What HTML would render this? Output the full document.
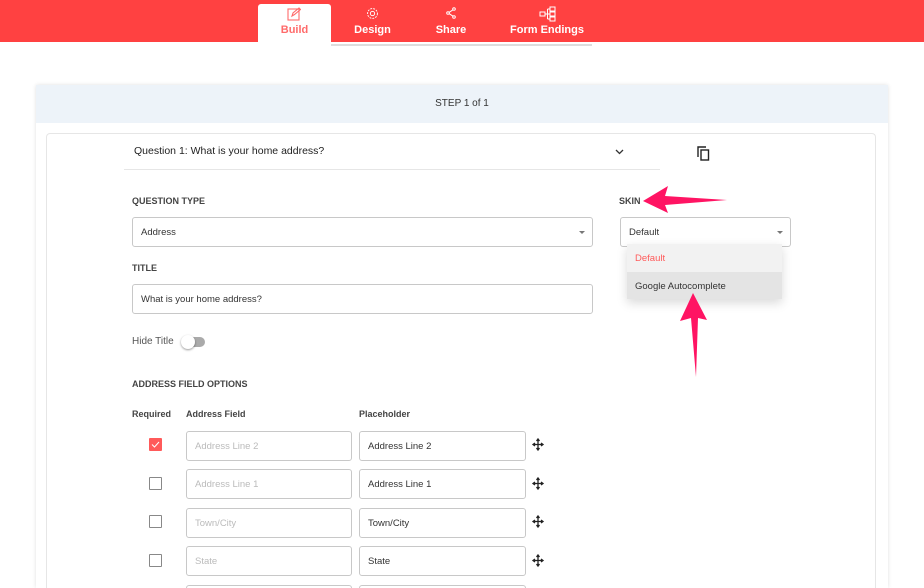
<!DOCTYPE html>
<html><head><meta charset="utf-8"><style>
*{box-sizing:border-box;margin:0;padding:0}
html,body{width:924px;height:588px;overflow:hidden}
body{background:#fff;font-family:"Liberation Sans",sans-serif;color:#333;position:relative}
.a{position:absolute}
.hdr{left:0;top:0;width:924px;height:42px;background:#ff4141}
.tab{top:0;height:42px;color:#fff;font-size:11px;font-weight:bold;text-align:center}
.tab span{position:absolute;left:0;right:0;top:24px}
.lbl{font-size:9px;font-weight:bold;color:#444}
.inp{border:1px solid #c8c8c8;border-radius:3px;background:#fff;font-size:9.5px;color:#333;padding-left:8px;display:flex;align-items:center}
.ph{color:#bbb}
.cb{width:13px;height:13px;border:1px solid #888;border-radius:1px;background:#fff}
</style></head><body>
<div class="a hdr"></div>
<div class="a" style="left:258px;top:4px;width:73px;height:38px;background:#fff;border-radius:3px 3px 0 0"></div>
<div class="a" style="left:331px;top:44px;width:261px;height:2px;background:#ddd"></div>
<div class="a tab" style="left:258px;width:73px;color:#ff6b6b">
<svg class="a" style="left:29px;top:7px" width="14" height="14" viewBox="0 0 14 14" fill="none" stroke="#ff6b6b" stroke-width="1.1"><rect x="1" y="2" width="11" height="11"/><path d="M5 9l1-3 6-5 1.5 1.5-6 5z"/></svg>
<span>Build</span></div>
<div class="a tab" style="left:340px;width:65px">
<svg class="a" style="left:26px;top:7px" width="13" height="13" viewBox="0 0 14 14" fill="none" stroke="#fff" stroke-width="1"><circle cx="7" cy="7" r="2.3"/><circle cx="7" cy="7" r="5.3" stroke-dasharray="2 1.2"/></svg>
<span>Design</span></div>
<div class="a tab" style="left:420px;width:62px">
<svg class="a" style="left:25px;top:7px" width="12" height="12" viewBox="0 0 12 12" fill="none" stroke="#fff" stroke-width="1"><circle cx="9" cy="2" r="1.3"/><circle cx="3" cy="6" r="1.3"/><circle cx="9" cy="10" r="1.3"/><path d="M4 5.4l4-2.6M4 6.6l4 2.6"/></svg>
<span>Share</span></div>
<div class="a tab" style="left:505px;width:84px">
<svg class="a" style="left:34px;top:6px" width="17" height="16" viewBox="0 0 17 16" fill="none" stroke="#fff" stroke-width="1"><rect x="1" y="6" width="5" height="4"/><rect x="11" y="1" width="5" height="4"/><rect x="11" y="6" width="5" height="4"/><rect x="11" y="11" width="5" height="4"/><path d="M6 8h5M8.5 3v10M8.5 3h2.5M8.5 13h2.5"/></svg>
<span>Form Endings</span></div>

<div class="a" style="left:36px;top:85px;width:852px;height:503px;background:#fff;box-shadow:0 0 4px rgba(0,0,0,.12)"></div>
<div class="a" style="left:36px;top:85px;width:852px;height:38px;background:#edf3f9;font-size:10px;color:#333;text-align:center;line-height:38px">STEP 1 of 1</div>
<div class="a" style="left:46px;top:133px;width:830px;height:455px;border:1px solid #e6e6e6;border-bottom:0;border-radius:4px 4px 0 0"></div>
<div class="a" style="left:134px;top:145px;font-size:10.5px;color:#222">Question 1: What is your home address?</div>
<div class="a" style="left:124px;top:169px;width:536px;height:1px;background:#e6e6e6"></div>
<svg class="a" style="left:615px;top:148px" width="9" height="7" viewBox="0 0 9 7" fill="none" stroke="#333" stroke-width="1.3"><path d="M1 2l3.5 3.5L8 2"/></svg>
<svg class="a" style="left:697px;top:146px" width="13" height="15" viewBox="0 0 13 15" fill="none" stroke="#222" stroke-width="1.4"><path d="M1 11V1h8"/><rect x="4" y="4" width="7.5" height="10"/></svg>

<div class="a lbl" style="left:132px;top:196px">QUESTION TYPE</div>
<div class="a inp" style="left:132px;top:217px;width:461px;height:30px">Address</div>
<div class="a" style="left:579px;top:231px;border:3px solid transparent;border-top:3px solid #777;border-bottom:0"></div>
<div class="a lbl" style="left:619px;top:196px">SKIN</div>
<div class="a inp" style="left:620px;top:217px;width:171px;height:30px">Default</div>
<div class="a" style="left:777px;top:231px;border:3px solid transparent;border-top:3px solid #777;border-bottom:0"></div>
<div class="a" style="left:627px;top:244px;width:155px;height:55px;background:#f2f2f2;box-shadow:0 4px 10px rgba(0,0,0,.15)"></div>
<div class="a" style="left:627px;top:272px;width:155px;height:27px;background:#e4e4e4"></div>
<div class="a" style="left:635px;top:253px;font-size:9.5px;color:#ff5a5a">Default</div>
<div class="a" style="left:635px;top:281px;font-size:9.5px;color:#333">Google Autocomplete</div>

<div class="a lbl" style="left:132px;top:263px">TITLE</div>
<div class="a inp" style="left:132px;top:284px;width:461px;height:30px">What is your home address?</div>
<div class="a" style="left:132px;top:336px;font-size:10px;color:#555">Hide Title</div>
<div class="a" style="left:183px;top:337px;width:22px;height:10px;border-radius:5px;background:#aaa"></div>
<div class="a" style="left:181px;top:335px;width:14px;height:14px;border-radius:7px;background:#fff;box-shadow:0 1px 2px rgba(0,0,0,.4)"></div>
<div class="a lbl" style="left:132px;top:379px">ADDRESS FIELD OPTIONS</div>
<div class="a lbl" style="left:132px;top:409px">Required</div>
<div class="a lbl" style="left:186px;top:409px">Address Field</div>
<div class="a lbl" style="left:359px;top:409px">Placeholder</div>

<div class="a cb" style="left:149px;top:438px;background:#ff5a5a;border-color:#ff5a5a"></div>
<svg class="a" style="left:151px;top:441px" width="9" height="7" viewBox="0 0 9 7" fill="none" stroke="#fff" stroke-width="1"><path d="M1 3.5l2.5 2.5L8 1"/></svg>
<div class="a inp ph" style="left:186px;top:431px;width:166px;height:30px">Address Line 2</div>
<div class="a inp" style="left:359px;top:431px;width:167px;height:30px">Address Line 2</div>

<div class="a cb" style="left:149px;top:477px"></div>
<div class="a inp ph" style="left:186px;top:469px;width:166px;height:30px">Address Line 1</div>
<div class="a inp" style="left:359px;top:469px;width:167px;height:30px">Address Line 1</div>

<div class="a cb" style="left:149px;top:515px"></div>
<div class="a inp ph" style="left:186px;top:508px;width:166px;height:30px">Town/City</div>
<div class="a inp" style="left:359px;top:508px;width:167px;height:30px">Town/City</div>

<div class="a cb" style="left:149px;top:554px"></div>
<div class="a inp ph" style="left:186px;top:546px;width:166px;height:30px">State</div>
<div class="a inp" style="left:359px;top:546px;width:167px;height:30px">State</div>

<div class="a" style="left:186px;top:585px;width:166px;height:3px;border:1px solid #c8c8c8;border-bottom:0;border-radius:3px 3px 0 0"></div>
<div class="a" style="left:359px;top:585px;width:167px;height:3px;border:1px solid #c8c8c8;border-bottom:0;border-radius:3px 3px 0 0"></div>

<svg class="a" style="left:0;top:0" width="924" height="588" viewBox="0 0 924 588">
<g fill="none" stroke="#222" stroke-width="1.3">
<path d="M538 439v11M533 444.5h10M536.5 441l1.5-2 1.5 2M536.5 448l1.5 2 1.5-2M535 443l-2 1.5 2 1.5M541 443l2 1.5-2 1.5"/>
<path d="M538 478v11M533 483.5h10M536.5 480l1.5-2 1.5 2M536.5 487l1.5 2 1.5-2M535 482l-2 1.5 2 1.5M541 482l2 1.5-2 1.5"/>
<path d="M538 516v11M533 521.5h10M536.5 518l1.5-2 1.5 2M536.5 525l1.5 2 1.5-2M535 520l-2 1.5 2 1.5M541 520l2 1.5-2 1.5"/>
<path d="M538 555v11M533 560.5h10M536.5 557l1.5-2 1.5 2M536.5 564l1.5 2 1.5-2M535 559l-2 1.5 2 1.5M541 559l2 1.5-2 1.5"/>
</g>
<path d="M643 201 L668 186 L665 196 L727 200 L665 205 L668 213 Z" fill="#ff1463"/>
<path d="M693 293 L707 320 L698 318 L696 377 L691 318 L680 321 Z" fill="#ff1463"/>
</svg>
</body></html>
